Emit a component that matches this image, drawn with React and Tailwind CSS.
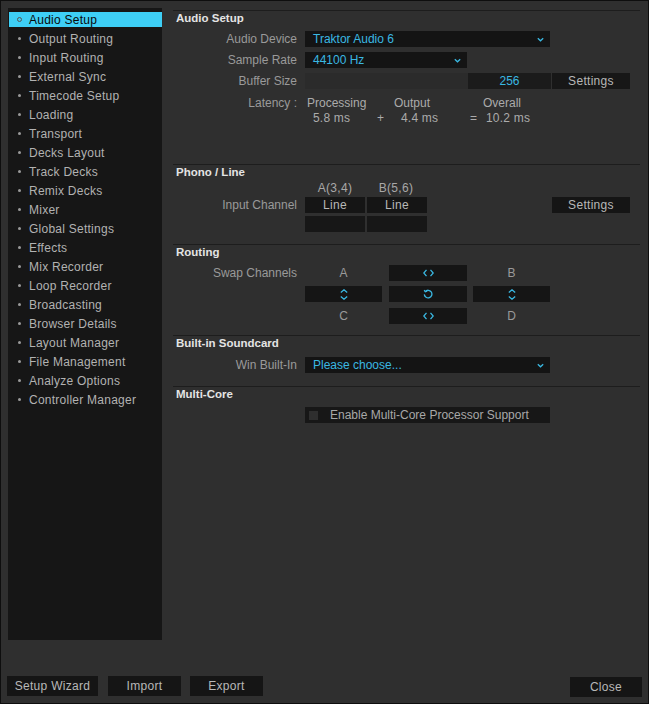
import React from 'react';

const font = { fontFamily: '"Liberation Sans", Arial, sans-serif' };

const menu = [
  'Audio Setup',
  'Output Routing',
  'Input Routing',
  'External Sync',
  'Timecode Setup',
  'Loading',
  'Transport',
  'Decks Layout',
  'Track Decks',
  'Remix Decks',
  'Mixer',
  'Global Settings',
  'Effects',
  'Mix Recorder',
  'Loop Recorder',
  'Broadcasting',
  'Browser Details',
  'Layout Manager',
  'File Management',
  'Analyze Options',
  'Controller Manager',
];

function Chevron() {
  return (
    <svg width="7" height="5" viewBox="0 0 7 5" fill="none" stroke="#3ab8e2" strokeWidth="1.3">
      <path d="M0.8 1.2 L3.5 3.8 L6.2 1.2" />
    </svg>
  );
}

function LeftRight() {
  return (
    <svg width="11" height="8" viewBox="0 0 11 8" fill="none" stroke="#3ab8e2" strokeWidth="1.3">
      <path d="M3.5 0.8 L0.8 4 L3.5 7.2" />
      <path d="M7.5 0.8 L10.2 4 L7.5 7.2" />
    </svg>
  );
}

function UpDown() {
  return (
    <svg width="8" height="11" viewBox="0 0 8 11" fill="none" stroke="#3ab8e2" strokeWidth="1.3">
      <path d="M0.8 3.5 L4 0.8 L7.2 3.5" />
      <path d="M0.8 7.5 L4 10.2 L7.2 7.5" />
    </svg>
  );
}

function Reset() {
  return (
    <svg width="10" height="10" viewBox="0 0 10 10" fill="none" stroke="#3ab8e2" strokeWidth="1.3">
      <path d="M2.2 2.6 A3.8 3.8 0 1 1 1.3 5.4" />
      <path d="M1.2 1.2 L2.3 2.8 L4.2 2.2" />
    </svg>
  );
}

function Label({ children }) {
  return <div className="w-[124px] text-right text-[12px] text-[#9a9a9a] leading-none">{children}</div>;
}

function Dropdown({ value, width }) {
  return (
    <div className={`${width} h-[16px] bg-[#141414] flex items-center justify-between pl-[8px] pr-[6px]`}>
      <span className="text-[12px] text-[#3ab8e2]">{value}</span>
      <Chevron />
    </div>
  );
}

function Heading({ children }) {
  return (
    <div className="h-[15px] flex items-center pl-[3px] text-[11.5px] font-bold text-[#e4e4e4]">
      {children}
    </div>
  );
}

function DarkBtn({ children, className = '' }) {
  return (
    <div className={`h-[16px] bg-[#151515] flex items-center justify-center text-[12px] text-[#b8b8b8] tracking-[0.3px] ${className}`}>
      {children}
    </div>
  );
}

export default function App() {
  return (
    <div
      className="w-[649px] h-[704px] bg-[#2f2f2f] border border-[#0e0e0e] flex flex-col"
      style={font}
    >
      <div className="flex pt-[7px] pl-[7px] pr-[8px]">
        {/* sidebar */}
        <div className="w-[154px] h-[632px] bg-[#161616] pt-[2px]">
          {menu.map((item, i) => (
            <div key={item} className="h-[19px] py-[2px]">
              <div
                className={`h-[15px] ml-[1px] flex items-center text-[12px] tracking-[0.25px] ${
                  i === 0 ? 'bg-[#3ecff6] text-[#0a0a0a]' : 'text-[#b2b2b2]'
                }`}
              >
                <div className="w-[19px] flex justify-center pl-[2px]">
                  {i === 0 ? (
                    <div className="w-[5px] h-[5px] rounded-full border border-[#555]" />
                  ) : (
                    <div className="w-[3px] h-[3px] rounded-full bg-[#9a9a9a]" />
                  )}
                </div>
                <span className="ml-[1px]">{item}</span>
              </div>
            </div>
          ))}
        </div>

        {/* content */}
        <div className="flex-1 ml-[11px] mt-[2px]">
          {/* Audio Setup */}
          <div className="h-[154px] border-t border-[#1d1d1d]">
            <Heading>Audio Setup</Heading>
            <div className="mt-[5px] flex items-center h-[16px]">
              <Label>Audio Device</Label>
              <div className="ml-[8px]">
                <Dropdown value="Traktor Audio 6" width="w-[245px]" />
              </div>
            </div>
            <div className="mt-[5px] flex items-center h-[16px]">
              <Label>Sample Rate</Label>
              <div className="ml-[8px]">
                <Dropdown value="44100 Hz" width="w-[162px]" />
              </div>
            </div>
            <div className="mt-[5px] flex items-center h-[16px]">
              <Label>Buffer Size</Label>
              <div className="ml-[8px] flex h-[16px]">
                <div className="w-[163px] bg-[#2b2b2b]" />
                <div className="w-[83px] bg-[#1b1b1b] flex items-center justify-center text-[12px] text-[#3ab8e2]">256</div>
                <DarkBtn className="w-[78px] ml-[1px] !bg-[#171717]">Settings</DarkBtn>
              </div>
            </div>
            <div className="mt-[6px] flex items-center h-[15px]">
              <Label>Latency :</Label>
              <div className="ml-[8px] flex text-[12px] text-[#ababab]">
                <div className="w-[89px] pl-[2px]">Processing</div>
                <div className="w-[89px]">Output</div>
                <div>Overall</div>
              </div>
            </div>
            <div className="flex items-center h-[15px]">
              <div className="w-[124px]" />
              <div className="ml-[8px] flex text-[12px] text-[#ababab] tracking-[0.2px]">
                <div className="w-[72px] pl-[8px]">5.8 ms</div>
                <div className="w-[24px]">+</div>
                <div className="w-[69px]">4.4 ms</div>
                <div className="w-[16px]">=</div>
                <div>10.2 ms</div>
              </div>
            </div>
          </div>

          {/* Phono / Line */}
          <div className="h-[80px] border-t border-[#1d1d1d]">
            <Heading>Phono / Line</Heading>
            <div className="h-[16px] flex items-center text-[12px] text-[#a8a8a8] tracking-[0.3px]">
              <div className="w-[132px]" />
              <div className="w-[60px] text-center">A(3,4)</div>
              <div className="w-[62px] text-center">B(5,6)</div>
            </div>
            <div className="mt-[1px] flex items-center h-[16px]">
              <Label>Input Channel</Label>
              <div className="ml-[8px] flex gap-[2px]">
                <DarkBtn className="w-[60px]">Line</DarkBtn>
                <DarkBtn className="w-[60px]">Line</DarkBtn>
              </div>
              <DarkBtn className="w-[78px] ml-[125px]">Settings</DarkBtn>
            </div>
            <div className="mt-[3px] flex h-[16px]">
              <div className="w-[132px]" />
              <div className="flex gap-[2px]">
                <div className="w-[60px] h-[16px] bg-[#171717]" />
                <div className="w-[60px] h-[16px] bg-[#171717]" />
              </div>
            </div>
          </div>

          {/* Routing */}
          <div className="h-[91px] border-t border-[#1d1d1d]">
            <Heading>Routing</Heading>
            <div className="mt-[5px] flex items-center h-[16px]">
              <Label>Swap Channels</Label>
              <div className="ml-[8px] flex items-center">
                <div className="w-[77px] text-center text-[12px] text-[#9a9a9a]">A</div>
                <DarkBtn className="w-[78px] ml-[7px]"><LeftRight /></DarkBtn>
                <div className="w-[77px] ml-[6px] text-center text-[12px] text-[#9a9a9a]">B</div>
              </div>
            </div>
            <div className="mt-[5px] flex items-center h-[16px]">
              <div className="w-[124px]" />
              <div className="ml-[8px] flex items-center">
                <DarkBtn className="w-[77px]"><UpDown /></DarkBtn>
                <DarkBtn className="w-[78px] ml-[7px]"><Reset /></DarkBtn>
                <DarkBtn className="w-[77px] ml-[6px]"><UpDown /></DarkBtn>
              </div>
            </div>
            <div className="mt-[6px] flex items-center h-[16px]">
              <div className="w-[124px]" />
              <div className="ml-[8px] flex items-center">
                <div className="w-[77px] text-center text-[12px] text-[#9a9a9a]">C</div>
                <DarkBtn className="w-[78px] ml-[7px]"><LeftRight /></DarkBtn>
                <div className="w-[77px] ml-[6px] text-center text-[12px] text-[#9a9a9a]">D</div>
              </div>
            </div>
          </div>

          {/* Built-in Soundcard */}
          <div className="h-[51px] border-t border-[#1d1d1d]">
            <Heading>Built-in Soundcard</Heading>
            <div className="mt-[6px] flex items-center h-[16px]">
              <Label>Win Built-In</Label>
              <div className="ml-[8px]">
                <Dropdown value="Please choose..." width="w-[245px]" />
              </div>
            </div>
          </div>

          {/* Multi-Core */}
          <div className="border-t border-[#1d1d1d]">
            <Heading>Multi-Core</Heading>
            <div className="mt-[5px] flex items-center h-[16px]">
              <div className="w-[132px]" />
              <div className="w-[245px] h-[16px] bg-[#171717] flex items-center pl-[4px]">
                <div className="w-[9px] h-[9px] bg-[#2e2e2e]" />
                <span className="ml-[12px] text-[12px] text-[#a8a8a8]">
                  Enable Multi-Core Processor Support
                </span>
              </div>
            </div>
          </div>
        </div>
      </div>

      {/* bottom bar */}
      <div className="mt-auto flex items-start pl-[6px] pr-[6px] pb-[6px]">
        <DarkBtn className="w-[91px] !h-[20px]">Setup Wizard</DarkBtn>
        <DarkBtn className="w-[73px] !h-[20px] ml-[10px]">Import</DarkBtn>
        <DarkBtn className="w-[73px] !h-[20px] ml-[9px]">Export</DarkBtn>
        <DarkBtn className="w-[72px] !h-[20px] ml-auto mt-[1px]">Close</DarkBtn>
      </div>
    </div>
  );
}
